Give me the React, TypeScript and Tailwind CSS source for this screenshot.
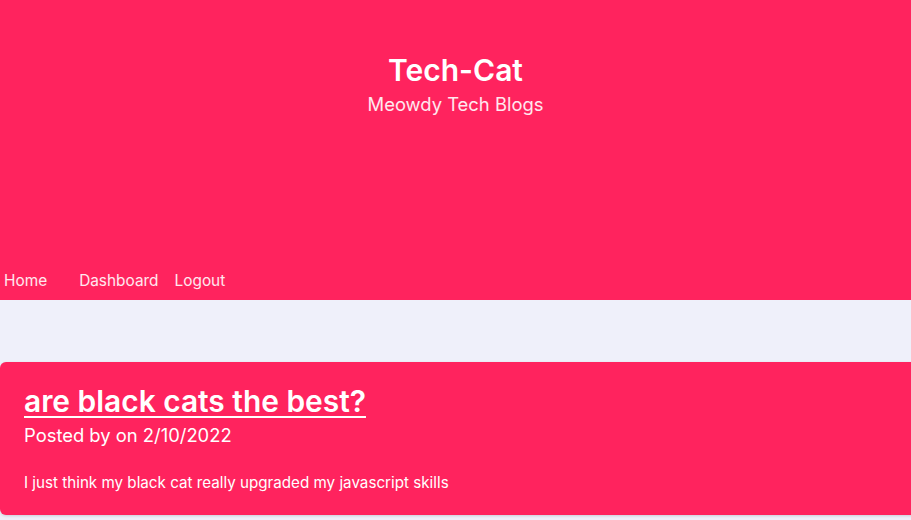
export default function App() {
  return (
    <div className="min-h-screen bg-[#eff0fa] font-['Inter',sans-serif] text-white overflow-hidden">
      <header className="flex h-[300px] flex-col bg-[#ff235e]">
        <div className="flex flex-col items-center pt-[50px]">
          <h1 className="text-[30px] font-semibold leading-[40px]">Tech-Cat</h1>
          <p className="text-[18.4px] leading-[28px] text-white/90">Meowdy Tech Blogs</p>
        </div>
        <nav className="mt-auto flex h-[40px] items-center pl-[4px] pt-[2px] text-[15.4px] text-white/90">
          <a href="#" className="mr-[32px]">Home</a>
          <a href="#" className="mr-[16px]">Dashboard</a>
          <a href="#">Logout</a>
        </nav>
      </header>

      <main className="pt-[62px]">
        <article className="w-[calc(100%+20px)] rounded-md bg-[#ff235e] px-6 pb-[20px] pt-[19px] shadow-[0_1px_3px_rgba(0,0,0,0.15)]">
          <h2 className="text-[29.9px] font-semibold leading-[40px]">
            <a href="#" className="underline decoration-2 underline-offset-[4px]">are black cats the best?</a>
          </h2>
          <p className="text-[18.4px] leading-[28px]">Posted by on 2/10/2022</p>
          <p className="mt-[22px] text-[15.2px] leading-[24px]">I just think my black cat really upgraded my javascript skills</p>
        </article>
      </main>
    </div>
  );
}
